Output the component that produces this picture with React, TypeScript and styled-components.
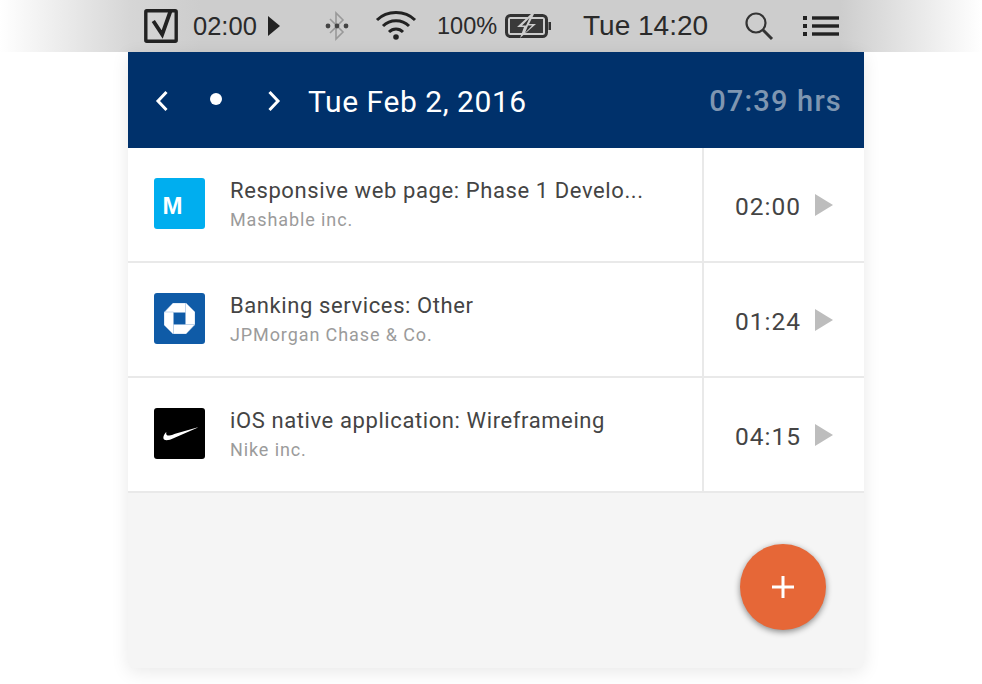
import React from 'react';
import styled, { createGlobalStyle } from 'styled-components';

const GlobalStyle = createGlobalStyle`
  html, body {
    margin: 0;
    padding: 0;
    background: #fff;
    font-family: "Roboto", "Liberation Sans", sans-serif;
  }
`;

const Page = styled.div`
  width: 982px;
  height: 684px;
  overflow: hidden;
  background: #fff;
`;

const MenuBar = styled.div`
  height: 52px;
  box-sizing: border-box;
  padding-left: 144px;
  display: flex;
  align-items: center;
  background: linear-gradient(90deg, #fff 0, #d6d6d6 130px, #cdcdcd 200px, #cdcdcd 840px, #fff 982px);
  color: #222;
`;

const MenuItem = styled.div<{ $w: number }>`
  width: ${(p) => p.$w}px;
  flex: none;
  display: flex;
  align-items: center;
`;

const MenuText = styled.span<{ $size?: number }>`
  font-family: "Liberation Sans", sans-serif;
  font-size: ${(p) => p.$size ?? 24}px;
  color: #2a2a2a;
  white-space: nowrap;
`;

const Panel = styled.div`
  width: 736px;
  margin-left: 128px;
  height: 616px;
  display: flex;
  flex-direction: column;
  background: #f5f5f5;
  border-radius: 0 0 6px 6px;
  box-shadow: 0 4px 18px rgba(0, 0, 0, 0.09);
`;

const Header = styled.div`
  height: 96px;
  flex: none;
  box-sizing: border-box;
  padding: 2px 22px 0 27px;
  display: flex;
  align-items: center;
  background: #00316b;
  color: #fff;
`;

const NavButton = styled.div<{ $w: number }>`
  width: ${(p) => p.$w}px;
  flex: none;
  display: flex;
  align-items: center;
`;

const Dot = styled.div`
  width: 12px;
  height: 12px;
  margin-top: -5px;
  border-radius: 50%;
  background: #fff;
`;

const DateTitle = styled.div`
  flex: 1;
  font-size: 30px;
  letter-spacing: 0.55px;
`;

const Total = styled.div`
  font-size: 29px;
  font-weight: 500;
  letter-spacing: 1.2px;
  color: #7f96b1;
`;

const Row = styled.div`
  height: 115px;
  flex: none;
  box-sizing: border-box;
  display: flex;
  background: #fff;
  border-bottom: 2px solid #e9e9e9;
`;

const RowMain = styled.div`
  width: 576px;
  flex: none;
  box-sizing: border-box;
  padding: 0 0 0 26px;
  display: flex;
  align-items: center;
  border-right: 2px solid #e9e9e9;
`;

const Logo = styled.div<{ $bg: string }>`
  width: 51px;
  height: 51px;
  flex: none;
  margin: -2px 25px 0 0;
  border-radius: 3px;
  display: flex;
  align-items: center;
  justify-content: center;
  background: ${(p) => p.$bg};
`;

const MashableLetter = styled.span`
  font-family: "Liberation Sans", sans-serif;
  font-weight: 700;
  font-size: 24px;
  color: #fff;
  margin: 5px 14px 0 0;
`;

const RowText = styled.div`
  display: flex;
  flex-direction: column;
  margin-top: 2px;
`;

const Title = styled.div`
  font-size: 22px;
  line-height: 28px;
  letter-spacing: 0.6px;
  color: #444;
  white-space: nowrap;
`;

const Client = styled.div`
  font-size: 18px;
  line-height: 28px;
  margin-top: 1px;
  letter-spacing: 0.9px;
  color: #9b9b9b;
  white-space: nowrap;
`;

const RowTime = styled.div`
  flex: 1;
  box-sizing: border-box;
  padding: 0 0 0 31px;
  display: flex;
  align-items: center;
  gap: 14px;
`;

const Duration = styled.div`
  font-size: 24.5px;
  letter-spacing: 1px;
  color: #444;
  margin-top: 4px;
`;

const PlayArrow = styled.svg`
  margin-top: 1px;
`;

const Footer = styled.div`
  flex: 1;
  display: flex;
  justify-content: flex-end;
  align-items: flex-start;
  padding: 51px 38px 0 0;
`;

const Fab = styled.button`
  width: 86px;
  height: 86px;
  padding: 0;
  border: 0;
  border-radius: 50%;
  display: flex;
  align-items: center;
  justify-content: center;
  background: #e66737;
  box-shadow: 0 2px 6px rgba(0, 0, 0, 0.45);
`;

const ChaseMark = () => (
  <svg width="31" height="31" viewBox="0 0 31 31">
    <g fill="#fff" stroke="#8fb2d8" strokeWidth="0.5">
      <path d="M0 9.5 L9 0 H22 V9.5 Z" />
      <path d="M22 0 L31 9 V22 H21.5 V0 Z" />
      <path d="M31 21.5 L22 31 H9 V21.5 Z" />
      <path d="M9 31 L0 22 V9 H9.5 V31 Z" />
    </g>
  </svg>
);

const Swoosh = () => (
  <svg width="36" height="14" viewBox="-1 0 36 14">
    <path
      d="M36 0 L10.5 11.2 C7.5 12.5 3.5 14 1.5 12.8 C-0.8 11.4 0.6 8 3.4 4.8 C2.8 7.2 3.4 8.8 6.2 8.6 C8.6 8.4 11 7.4 13 6.6 Z"
      fill="#fff"
    />
  </svg>
);

const rows = [
  { id: 'mashable', title: 'Responsive web page: Phase 1 Develo...', client: 'Mashable inc.', time: '02:00', bg: '#00aeef' },
  { id: 'chase', title: 'Banking services: Other', client: 'JPMorgan Chase & Co.', time: '01:24', bg: '#0f5ba7' },
  { id: 'nike', title: 'iOS native application: Wireframeing', client: 'Nike inc.', time: '04:15', bg: '#000' },
];

export default function App() {
  return (
    <Page>
      <GlobalStyle />
      <MenuBar>
        <MenuItem $w={49}>
          <svg width="34" height="34" viewBox="0 0 34 34">
            <rect x="1.8" y="1.8" width="30.4" height="30.4" rx="1" fill="none" stroke="#222" strokeWidth="3.4" />
            <path d="M9.3 12 L18.2 25.5 L26.5 2" fill="none" stroke="#222" strokeWidth="3.8" />
          </svg>
        </MenuItem>
        <MenuItem $w={75}>
          <MenuText $size={25.5}>02:00</MenuText>
        </MenuItem>
        <MenuItem $w={57}>
          <svg width="12" height="20" viewBox="0 0 12 20">
            <path d="M0 0 L12 10 L0 20 Z" fill="#222" />
          </svg>
        </MenuItem>
        <MenuItem $w={50}>
          <svg width="24" height="30" viewBox="0 0 24 30">
            <path d="M5 8 L18 21 L11 28 V2 L18 9 L5 22" fill="none" stroke="#999" strokeWidth="1.6" />
            <g fill="#444">
              <circle cx="3" cy="15" r="2.4" />
              <circle cx="12" cy="15" r="2.4" />
              <circle cx="21" cy="15" r="2.4" />
            </g>
          </svg>
        </MenuItem>
        <MenuItem $w={62}>
          <svg width="42" height="32" viewBox="0 0 42 32">
            <g fill="none" stroke="#222" strokeWidth="3">
              <path d="M2 10 C12 0 30 0 40 10" />
              <path d="M8 16 C15 9 27 9 34 16" />
              <path d="M14 22 C18 18 24 18 28 22" />
            </g>
            <circle cx="21" cy="27" r="2.8" fill="#222" />
          </svg>
        </MenuItem>
        <MenuItem $w={68}>
          <MenuText $size={23.5}>100%</MenuText>
        </MenuItem>
        <MenuItem $w={78}>
          <svg width="47" height="26" viewBox="0 0 47 26">
            <rect x="1.5" y="2.5" width="40" height="21" rx="4" fill="none" stroke="#333" strokeWidth="3" />
            <rect x="5" y="6" width="33" height="14" fill="#3a3a3a" />
            <rect x="43.5" y="9" width="2.5" height="8" fill="#333" />
            <path d="M26 1 L12 14 H19 L15 25 L31 11 H24 L29 1 Z" fill="#cdcdcd" />
            <path d="M24.5 5 L17 12.5 H23 L20 20 L27 12.5 H21 Z" fill="#333" />
          </svg>
        </MenuItem>
        <MenuItem $w={161}>
          <MenuText $size={28}>Tue 14:20</MenuText>
        </MenuItem>
        <MenuItem $w={59}>
          <svg width="30" height="30" viewBox="0 0 30 30">
            <circle cx="12" cy="12" r="9.5" fill="none" stroke="#333" strokeWidth="2.2" />
            <path d="M19 19 L28 28" stroke="#333" strokeWidth="3" />
          </svg>
        </MenuItem>
        <MenuItem $w={40}>
          <svg width="37" height="20" viewBox="0 0 37 20">
            <g fill="#222">
              <rect x="0" y="0" width="4" height="4" />
              <rect x="0" y="8" width="4" height="4" />
              <rect x="0" y="16" width="4" height="4" />
              <rect x="9" y="0.3" width="27" height="3.4" />
              <rect x="9" y="8.3" width="27" height="3.4" />
              <rect x="9" y="16.3" width="27" height="3.4" />
            </g>
          </svg>
        </MenuItem>
      </MenuBar>
      <Panel>
        <Header>
          <NavButton $w={55}>
            <svg width="14" height="22" viewBox="0 0 14 22">
              <path d="M11.5 2 L3 11 L11.5 20" fill="none" stroke="#fff" strokeWidth="3" />
            </svg>
          </NavButton>
          <NavButton $w={57}>
            <Dot />
          </NavButton>
          <NavButton $w={41}>
            <svg width="14" height="22" viewBox="0 0 14 22">
              <path d="M2.5 2 L11 11 L2.5 20" fill="none" stroke="#fff" strokeWidth="3" />
            </svg>
          </NavButton>
          <DateTitle>Tue Feb 2, 2016</DateTitle>
          <Total>07:39 hrs</Total>
        </Header>
        {rows.map((row) => (
          <Row key={row.id}>
            <RowMain>
              <Logo $bg={row.bg}>
                {row.id === 'mashable' && <MashableLetter>M</MashableLetter>}
                {row.id === 'chase' && <ChaseMark />}
                {row.id === 'nike' && <Swoosh />}
              </Logo>
              <RowText>
                <Title>{row.title}</Title>
                <Client>{row.client}</Client>
              </RowText>
            </RowMain>
            <RowTime>
              <Duration>{row.time}</Duration>
              <PlayArrow width="18" height="22" viewBox="0 0 18 22">
                <path d="M0 0 L18 11 L0 22 Z" fill="#bdbdbd" />
              </PlayArrow>
            </RowTime>
          </Row>
        ))}
        <Footer>
          <Fab aria-label="Add">
            <svg width="24" height="24" viewBox="0 0 24 24">
              <path d="M12 1 V23 M1 12 H23" stroke="#fff" strokeWidth="3" />
            </svg>
          </Fab>
        </Footer>
      </Panel>
    </Page>
  );
}
